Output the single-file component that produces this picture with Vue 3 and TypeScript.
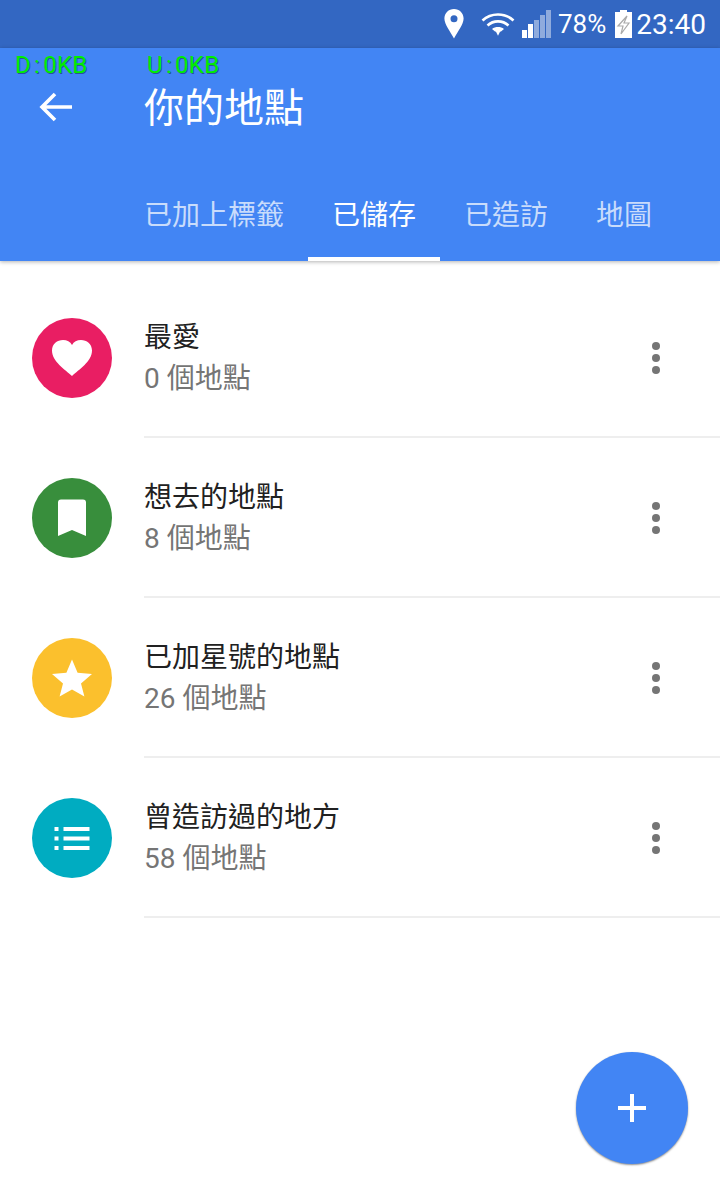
<script setup lang="ts">
interface PlaceList {
  title: string
  count: string
  color: string
  icon: 'heart' | 'bookmark' | 'star' | 'list'
}

const tabs = ['已加上標籤', '已儲存', '已造訪', '地圖']
const activeTab = 1

const lists: PlaceList[] = [
  { title: '最愛', count: '0 個地點', color: '#e91e63', icon: 'heart' },
  { title: '想去的地點', count: '8 個地點', color: '#388e3c', icon: 'bookmark' },
  { title: '已加星號的地點', count: '26 個地點', color: '#fbc02d', icon: 'star' },
  { title: '曾造訪過的地方', count: '58 個地點', color: '#00acc1', icon: 'list' },
]
</script>

<template>
  <div class="screen">
    <div class="status-bar">
      <svg class="pin" width="20" height="30" viewBox="0 0 20 30">
        <path fill="#fff" fill-rule="evenodd" d="M10 0C4.600 0 .4 4.200.4 9.600.4 15.600 6.600 23 10 29.600 13.400 23 19.600 15.600 19.600 9.600 19.600 4.200 15.400 0 10 0Zm0 6.200a3.500 3.500 0 1 1 0 7 3.500 3.500 0 0 1 0-7Z" />
      </svg>
      <svg class="wifi" width="34" height="26" viewBox="0 0 34 26">
        <g fill="none" stroke="#fff" stroke-width="2.6">
          <path d="M1.500 9.500C10 1.500 24 1.500 32.500 9.500" />
          <path d="M6.500 14.500C12.500 9 21.500 9 27.500 14.500" />
        </g>
        <path fill="#fff" d="M11 18c3.400-2.600 8.600-2.600 12 0l-3 2.600-1 .2-2 4-2-4-1-.2Z" />
      </svg>
      <svg class="signal" width="29" height="28" viewBox="0 0 29 28">
        <rect x="0" y="20" width="5" height="8" fill="#fff" />
        <rect x="6" y="14" width="5" height="14" fill="#fff" />
        <rect x="12" y="10" width="5" height="18" fill="#fff" fill-opacity=".45" />
        <rect x="18" y="5" width="5" height="23" fill="#fff" fill-opacity=".45" />
        <rect x="24" y="0" width="5" height="28" fill="#fff" fill-opacity=".45" />
      </svg>
      <span class="percent">78%</span>
      <svg class="battery" width="17" height="28" viewBox="0 0 17 28">
        <path fill="#fff" d="M5 0h7v2h5v26H0V2h5Z" />
        <path fill="none" stroke="#aaa" stroke-width="1.2" d="M12 6 3 16h5l-2 8 8-11H9Z" />
      </svg>
      <span class="clock">23:40</span>
    </div>

    <header class="app-bar">
      <div class="speed">
        <span class="speed-down">D<span class="colon">:</span>0KB</span>
        <span>U<span class="colon">:</span>0KB</span>
      </div>
      <div class="title-row">
        <svg class="back" width="36" height="32" viewBox="0 0 36 32">
          <path fill="none" stroke="#fff" stroke-width="3.6" d="M34 16H5M17 3 4 16l13 13" />
        </svg>
        <h1>你的地點</h1>
      </div>
      <nav class="tabs">
        <div v-for="(tab, i) in tabs" :key="tab" class="tab" :class="{ active: i === activeTab }">{{ tab }}</div>
      </nav>
    </header>

    <main class="list">
      <div v-for="item in lists" :key="item.title" class="row">
        <div class="avatar" :style="{ background: item.color }">
          <svg width="48" height="48" viewBox="0 0 48 48" fill="#fff">
            <path v-if="item.icon === 'heart'" d="M24 42C17 35.500 4 27.500 4 16.500 4 10 9.300 6 15 6 19 6 22.300 7.800 24 11 25.700 7.800 29 6 33 6 38.700 6 44 10 44 16.500 44 27.500 31 35.500 24 42Z" />
            <path v-else-if="item.icon === 'bookmark'" d="M13 5.500h22a3 3 0 0 1 3 3V42l-14-6-14 6V8.500a3 3 0 0 1 3-3Z" />
            <path v-else-if="item.icon === 'star'" d="m24 5.500 5.600 13.300L44 20l-11 9.500 3.400 13L24 35.500l-12.400 7 3.400-13L4 20l14.400-1.200Z" />
            <g v-else>
              <rect x="6.500" y="13" width="4" height="4" />
              <rect x="15.500" y="13" width="26" height="4" />
              <rect x="6.500" y="22.500" width="4" height="4" />
              <rect x="15.500" y="22.500" width="26" height="4" />
              <rect x="6.500" y="32" width="4" height="4" />
              <rect x="15.500" y="32" width="26" height="4" />
            </g>
          </svg>
        </div>
        <div class="body">
          <div class="text">
            <div class="title">{{ item.title }}</div>
            <div class="count">{{ item.count }}</div>
          </div>
          <div class="more">
            <i /><i /><i />
          </div>
        </div>
      </div>
    </main>

    <button class="fab" type="button">
      <svg width="28" height="28" viewBox="0 0 28 28">
        <path fill="#fff" d="M12 0h4v12h12v4H16v12h-4V16H0v-4h12Z" />
      </svg>
    </button>
  </div>
</template>

<style>
html,
body {
  margin: 0;
  background: #fff;
}
</style>

<style scoped>
.screen {
  position: relative;
  width: 720px;
  height: 1196px;
  overflow: hidden;
  background: #fff;
  font-family: Roboto, 'Noto Sans CJK TC', sans-serif;
}

.status-bar {
  height: 48px;
  box-sizing: border-box;
  padding-right: 14px;
  display: flex;
  align-items: center;
  justify-content: flex-end;
  background: #3367c2;
  color: #fff;
  font-size: 28px;
}

.pin {
  margin-right: 17px;
}

.wifi {
  margin-right: 7px;
}

.signal {
  margin-right: 7px;
}

.percent {
  margin-right: 9px;
  font-size: 26px;
}

.battery {
  margin-right: 4px;
}

.app-bar {
  position: relative;
  height: 213px;
  background: #4285f4;
  box-shadow: 0 1px 4px rgba(0, 0, 0, 0.3);
  display: flex;
  flex-direction: column;
  z-index: 1;
}

.speed {
  position: absolute;
  top: 2px;
  left: 15px;
  display: flex;
  color: #00ee00;
  font-size: 24px;
  line-height: 30px;
  letter-spacing: 0.3px;
  text-shadow: 1px 1px 0 rgba(0, 0, 0, 0.4);
}

.speed-down {
  width: 132px;
}

.colon {
  padding: 0 3px;
}

.title-row {
  height: 118px;
  box-sizing: border-box;
  padding-top: 2px;
  display: flex;
  align-items: center;
}

.back {
  margin: -2px 70px 0 38px;
}

h1 {
  margin: 2px 0 0;
  color: #fff;
  font-size: 40px;
  font-weight: 400;
  line-height: 56px;
}

.tabs {
  flex: 1;
  padding-left: 120px;
  display: flex;
}

.tab {
  padding: 0 24px;
  color: rgba(255, 255, 255, 0.72);
  font-size: 28px;
  line-height: 100px;
  height: 95px;
  box-sizing: border-box;
}

.tab.active {
  color: #fff;
  border-bottom: 4px solid #fff;
}

.list {
  padding-top: 17px;
}

.row {
  height: 160px;
  display: flex;
}

.avatar {
  flex: none;
  width: 80px;
  height: 80px;
  margin: 39.5px 32px 0;
  border-radius: 50%;
  display: flex;
  align-items: center;
  justify-content: center;
}

.body {
  flex: 1;
  display: flex;
  align-items: flex-start;
  justify-content: space-between;
  border-bottom: 2px solid #eeeeee;
}

.text {
  padding-top: 39px;
}

.title {
  color: #212121;
  font-size: 28px;
  line-height: 41px;
}

.count {
  color: #757575;
  font-size: 28px;
  line-height: 41px;
}

.more {
  width: 8px;
  margin: 64px 60px 0 0;
  display: flex;
  flex-direction: column;
  gap: 4px;
}

.more i {
  width: 8px;
  height: 8px;
  border-radius: 50%;
  background: #757575;
}

.fab {
  position: absolute;
  right: 32px;
  bottom: 32px;
  width: 112px;
  height: 112px;
  padding: 0;
  border: 0;
  border-radius: 50%;
  background: #4285f4;
  box-shadow: 0 1px 2px rgba(0, 0, 0, 0.45);
  display: flex;
  align-items: center;
  justify-content: center;
}
</style>
